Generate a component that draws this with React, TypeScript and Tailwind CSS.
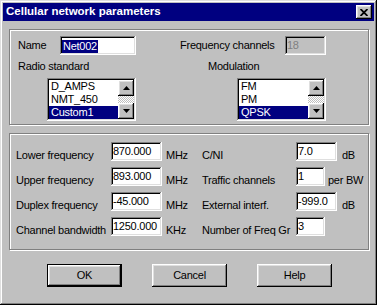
const raised =
  "shadow-[inset_-1px_-1px_#000,inset_1px_1px_#fff,inset_-2px_-2px_#808080,inset_2px_2px_#dfdfdf]";
const sunken =
  "shadow-[inset_-1px_-1px_#fff,inset_1px_1px_#808080,inset_-2px_-2px_#dfdfdf,inset_2px_2px_#000]";
const etched = "border border-[#808080] shadow-[inset_1px_1px_#fff,1px_1px_#fff]";

function Field({ value, className, disabled }: { value: string; className: string; disabled?: boolean }) {
  return (
    <div
      className={`${sunken} ${className} h-[19px] pl-[2px] pt-[3px] leading-[13px] whitespace-nowrap overflow-hidden ${
        disabled ? "bg-[#c0c0c0] text-[#808080]" : "bg-white"
      }`}
    >
      {value}
    </div>
  );
}

function Arrow({ up }: { up?: boolean }) {
  return (
    <div className={`${raised} w-[16px] h-[16px] bg-[#c0c0c0] flex items-center justify-center`}>
      <svg width="7" height="4" viewBox="0 0 7 4" className={up ? "" : "rotate-180"}>
        <polygon points="3.5,0 7,4 0,4" fill="#000" />
      </svg>
    </div>
  );
}

function ListBox({ items, selected }: { items: string[]; selected: number }) {
  return (
    <div className={`${sunken} w-[89px] h-[43px] bg-white p-[2px] flex`}>
      <div className="flex-1 flex flex-col">
        {items.map((it, i) => (
          <div
            key={it}
            className={`h-[13px] leading-[13px] pl-[2px] ${i === selected ? "bg-[#000080] text-white" : ""}`}
          >
            {it}
          </div>
        ))}
      </div>
      <div className="w-[16px] flex flex-col">
        <Arrow up />
        <div className="flex-1 bg-[repeating-conic-gradient(#fff_0%_25%,#c0c0c0_0%_50%)] bg-[length:2px_2px]" />
        <Arrow />
      </div>
    </div>
  );
}

function Row(props: {
  label: string;
  value: string;
  unit: string;
  label2: string;
  value2: string;
  unit2: string;
  narrow?: boolean;
}) {
  return (
    <div className="flex h-[19px]">
      <div className="w-[95px] pt-[7px] leading-[13px] whitespace-nowrap">{props.label}</div>
      <Field value={props.value} className="w-[51px]" />
      <div className="w-[40px] pl-[4px] pt-[7px] leading-[13px]">{props.unit}</div>
      <div className="w-[94px] pt-[7px] leading-[13px] whitespace-nowrap">{props.label2}</div>
      <Field value={props.value2} className={props.narrow ? "w-[29px]" : "w-[41px]"} />
      <div className={`${props.narrow ? "pl-[3px]" : "pl-[5px]"} pt-[7px] leading-[13px] whitespace-nowrap`}>
        {props.unit2}
      </div>
    </div>
  );
}

function Button({ label, isDefault }: { label: string; isDefault?: boolean }) {
  return (
    <div className={`w-[75px] h-[23px] ${isDefault ? "border border-black" : ""}`}>
      <div className={`${raised} w-full h-full flex items-center justify-center bg-[#c0c0c0]`}>{label}</div>
    </div>
  );
}

export default function App() {
  return (
    <div className="w-[377px] h-[305px] bg-[#c0c0c0] font-['Liberation_Sans',Arial,sans-serif] text-[11px] tracking-[-0.25px] text-black">
      <div className="w-full h-full p-[3px] flex flex-col shadow-[inset_-1px_-1px_#000,inset_1px_1px_#dfdfdf,inset_-2px_-2px_#808080,inset_2px_2px_#fff]">
        {/* title bar */}
        <div className="h-[18px] bg-[#000080] flex items-center justify-between pl-[3px] pr-[2px]">
          <span className="text-white font-bold text-[11.5px] tracking-normal">Cellular network parameters</span>
          <div className={`${raised} w-[16px] h-[14px] bg-[#c0c0c0] flex items-center justify-center`}>
            <svg width="8" height="7" viewBox="0 0 8 7">
              <path d="M0.5 0 L7.5 7 M7.5 0 L0.5 7" stroke="#000" strokeWidth="1.8" />
            </svg>
          </div>
        </div>

        <div className="pl-[6px] pt-[8px] flex flex-col">
          {/* group 1 */}
          <div className={`${etched} w-[360px] h-[96px] pt-[6px] pl-[8px] flex flex-col`}>
            <div className="flex h-[19px] items-start">
              <div className="w-[42px] pt-[3px] leading-[13px]">Name</div>
              <div className={`${sunken} w-[76px] h-[19px] bg-white pl-[2px] pt-[2px]`}>
                <span className="bg-[#000080] text-white leading-[13px] inline-block px-[1px]">Net002</span>
              </div>
              <div className="w-[44px]" />
              <div className="w-[105px] pt-[3px] leading-[13px] whitespace-nowrap">Frequency channels</div>
              <Field value="18" className="w-[41px]" disabled />
            </div>
            <div className="flex mt-[5px] leading-[13px]">
              <div className="w-[190px]">Radio standard</div>
              <div>Modulation</div>
            </div>
            <div className="flex mt-[5px] pl-[29px]">
              <ListBox items={["D_AMPS", "NMT_450", "Custom1"]} selected={2} />
              <div className="w-[101px]" />
              <ListBox items={["FM", "PM", "QPSK"]} selected={2} />
            </div>
          </div>

          {/* group 2 */}
          <div className={`${etched} w-[360px] h-[117px] mt-[8px] pt-[8px] pl-[6px] flex flex-col gap-[6px]`}>
            <Row label="Lower frequency" value="870.000" unit="MHz" label2="C/NI" value2="7.0" unit2="dB" />
            <Row
              label="Upper frequency"
              value="893.000"
              unit="MHz"
              label2="Traffic channels"
              value2="1"
              unit2="per BW"
              narrow
            />
            <Row
              label="Duplex frequency"
              value="-45.000"
              unit="MHz"
              label2="External interf."
              value2="-999.0"
              unit2="dB"
            />
            <Row
              label="Channel bandwidth"
              value="1250.000"
              unit="KHz"
              label2="Number of Freq Gr"
              value2="3"
              unit2=""
              narrow
            />
          </div>

          {/* buttons */}
          <div className="flex mt-[14px] pl-[38px] gap-[30px]">
            <Button label="OK" isDefault />
            <Button label="Cancel" />
            <Button label="Help" />
          </div>
        </div>
      </div>
    </div>
  );
}
